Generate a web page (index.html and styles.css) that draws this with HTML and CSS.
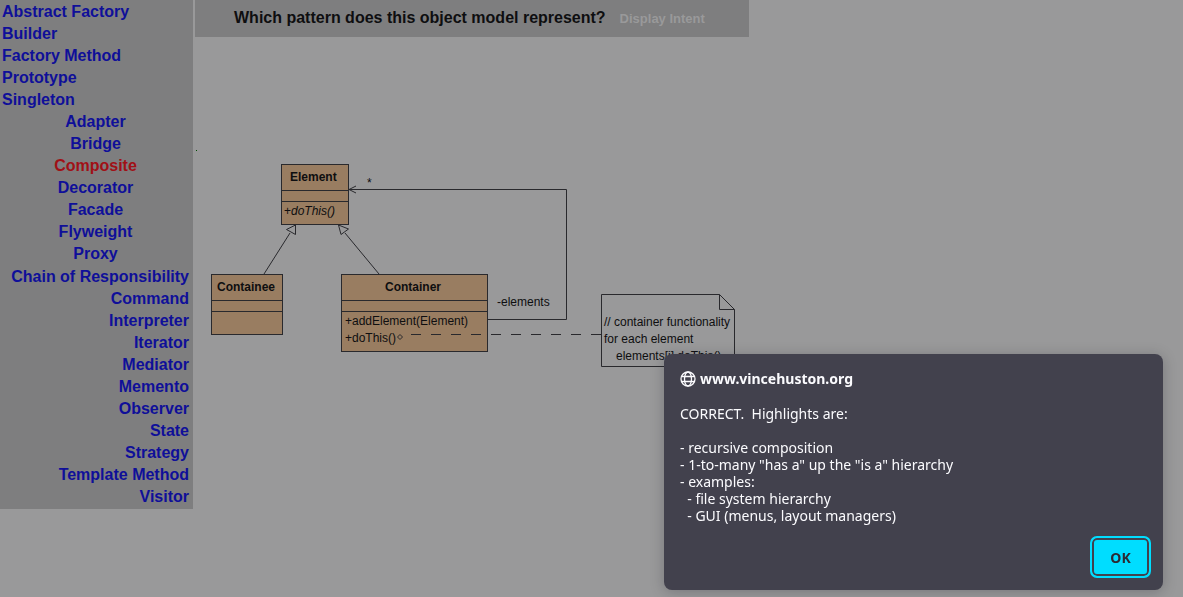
FILE: index.html
```html
<!DOCTYPE html>
<html lang="en">
<head>
<meta charset="utf-8">
<title>Design Patterns Quiz</title>
<link rel="stylesheet" href="styles.css">
</head>
<body>
<div class="page">
  <nav class="patterns" aria-label="Patterns">
    <ul class="group">
      <li><a href="#">Abstract Factory</a></li>
      <li><a href="#">Builder</a></li>
      <li><a href="#">Factory Method</a></li>
      <li><a href="#">Prototype</a></li>
      <li><a href="#">Singleton</a></li>
    </ul>
    <ul class="group structural">
      <li><a href="#">Adapter</a></li>
      <li><a href="#">Bridge</a></li>
      <li><a class="active" href="#">Composite</a></li>
      <li><a href="#">Decorator</a></li>
      <li><a href="#">Facade</a></li>
      <li><a href="#">Flyweight</a></li>
      <li><a href="#">Proxy</a></li>
    </ul>
    <ul class="group behavioral">
      <li><a href="#">Chain of Responsibility</a></li>
      <li><a href="#">Command</a></li>
      <li><a href="#">Interpreter</a></li>
      <li><a href="#">Iterator</a></li>
      <li><a href="#">Mediator</a></li>
      <li><a href="#">Memento</a></li>
      <li><a href="#">Observer</a></li>
      <li><a href="#">State</a></li>
      <li><a href="#">Strategy</a></li>
      <li><a href="#">Template Method</a></li>
      <li><a href="#">Visitor</a></li>
    </ul>
  </nav>
  <main class="content">
    <header class="question">
      <h1>Which pattern does this object model represent?</h1>
      <a class="intent" href="#">Display Intent</a>
    </header>
    <svg class="model" viewBox="195 37 560 360" width="560" height="360" role="img" aria-label="Object model">
      <rect class="dot" x="196" y="150" width="1" height="1"/>
      <g class="box">
        <rect x="281.5" y="164.5" width="67" height="60"/>
        <path d="M281 190.5h68M281 201.5h68"/>
        <rect x="211.5" y="274.5" width="71" height="60"/>
        <path d="M211 300.5h72M211 311.5h72"/>
        <rect x="341.5" y="274.5" width="146" height="77"/>
        <path d="M341 300.5h147M341 311.5h147"/>
      </g>
      <g class="line">
        <path d="M488 319.5H566.5V189.5H349M356 186l-7 3.500 7 3.500"/>
        <path d="M295.500 225V234.500L286.500 229.500L295.500 225M290 233L264 274"/>
        <path d="M338.500 225L341 234.500L348.500 229L338.500 225M345 233L379 274"/>
        <path d="M397.500 337L400 334.500L402.500 337L400 339.500Z"/>
        <path d="M411 334.500H601" stroke-dasharray="10 10"/>
        <path d="M591 334.500H601"/>
        <path d="M601.500 294.500H719.500L734.500 309.500V366.500H601.500ZM719.500 294.500V309.500H734.500"/>
      </g>
      <g class="label">
        <text class="name" x="290" y="181">Element</text>
        <text x="284" y="215">+<tspan class="abstract">doThis()</tspan></text>
        <text class="name" x="217" y="291">Containee</text>
        <text class="name" x="385" y="291">Container</text>
        <text x="345" y="325">+addElement(Element)</text>
        <text x="345" y="342">+doThis()</text>
        <text x="367" y="187">*</text>
        <text x="497" y="306">-elements</text>
        <text x="604" y="326">// container functionality</text>
        <text x="604" y="343">for each element</text>
        <text x="616" y="360">elements[i].doThis()</text>
      </g>
    </svg>
  </main>
</div>
<section class="dialog" role="alertdialog" aria-labelledby="site" aria-describedby="message">
  <h2 class="site">
    <svg class="globe" viewBox="0 0 16 16" width="16" height="16" aria-hidden="true">
      <circle cx="8" cy="8" r="7"/>
      <ellipse cx="8" cy="8" rx="3.500" ry="7"/>
      <path d="M1.500 5.500h13M1.500 10.500h13"/>
    </svg>
    <span id="site">www.vincehuston.org</span>
  </h2>
  <p class="message" id="message">CORRECT.  Highlights are:

- recursive composition
- 1-to-many "has a" up the "is a" hierarchy
- examples:
  - file system hierarchy
  - GUI (menus, layout managers)</p>
  <button class="ok" type="button">OK</button>
</section>
</body>
</html>
```
FILE: styles.css
```css
body {
  margin: 0;
  background: #99999a;
  color: #0e0e10;
  font-family: "Liberation Sans", Arial, sans-serif;
}

.page {
  display: flex;
  align-items: flex-start;
  gap: 2px;
}

.patterns {
  box-sizing: border-box;
  flex: 0 0 193px;
  padding: 1px 4px 1px 2px;
  background: #7e7e7f;
  font-size: 16px;
  font-weight: bold;
  line-height: 22px;
}

.group {
  margin: 0;
  padding: 0;
  list-style: none;
}

.structural {
  text-align: center;
}

.behavioral {
  padding-top: 1px;
  text-align: right;
}

.patterns a {
  color: #0f0f99;
  text-decoration: none;
}

.patterns .active {
  color: #a01016;
}

.content {
  flex: 1;
  min-width: 0;
}

.question {
  display: flex;
  align-items: baseline;
  gap: 14px;
  box-sizing: border-box;
  max-width: 554px;
  padding: 8px 39px;
  background: #7e7e7f;
  line-height: 20px;
  white-space: nowrap;
}

.question h1 {
  margin: 0;
  font-size: 16px;
}

.intent {
  color: #99999a;
  font-size: 13px;
  font-weight: bold;
  text-decoration: none;
}

.model {
  display: block;
}

.box {
  fill: #997d61;
  stroke: #29292d;
}

.line {
  fill: none;
  stroke: #29292d;
}

.dot {
  fill: #004d00;
}

.label {
  fill: #0e0e10;
  font-size: 12px;
}

.name {
  font-weight: bold;
}

.abstract {
  font-style: italic;
}

.dialog {
  position: fixed;
  right: 20px;
  bottom: 7px;
  display: flex;
  flex-direction: column;
  box-sizing: border-box;
  width: 499px;
  padding: 16px 12px 12px 16px;
  border-radius: 8px;
  background: #42414d;
  box-shadow: 0 2px 14px rgba(20, 20, 30, 0.25);
  color: #fbfbfe;
  font-family: "Noto Sans", sans-serif;
  font-size: 14px;
  line-height: 17px;
}

.site {
  display: flex;
  align-items: center;
  gap: 4px;
  margin: 0 0 18px;
  font-size: 14px;
}

.globe {
  fill: none;
  stroke: #fbfbfe;
  stroke-width: 1.3;
}

.message {
  margin: 0 0 12px;
  white-space: pre-wrap;
}

.ok {
  align-self: flex-end;
  min-width: 61px;
  height: 42px;
  padding: 0;
  border: 2px solid #00ddff;
  border-radius: 7px;
  background: #00ddff;
  box-shadow: inset 0 0 0 2px #42414d;
  color: #2b2a33;
  font: bold 14px "Noto Sans", sans-serif;
}
```
